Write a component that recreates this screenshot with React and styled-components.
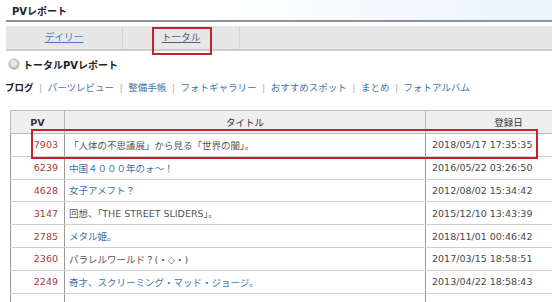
import React from "react";
import styled, { createGlobalStyle } from "styled-components";

const GlobalStyle = createGlobalStyle`
  html, body {
    margin: 0;
    padding: 0;
    background: #fff;
    overflow: hidden;
  }
  body {
    font-family: "DejaVu Sans", "Noto Sans CJK JP", sans-serif;
    font-size: 9.5px;
    color: #333;
  }
`;

const tabs = [
  { label: "デイリー", current: false },
  { label: "トータル", current: true },
];

const categories = ["パーツレビュー", "整備手帳", "フォトギャラリー", "おすすめスポット", "まとめ", "フォトアルバム"];

const rows = [
  { pv: 7903, title: "「人体の不思議展」から見る「世界の闇」。", date: "2018/05/17 17:35:35", visited: true },
  { pv: 6239, title: "中国４０００年のォ～！", date: "2016/05/22 03:26:50" },
  { pv: 4628, title: "女子アメフト？", date: "2012/08/02 15:34:42" },
  { pv: 3147, title: "回想、「THE STREET SLIDERS」。", date: "2015/12/10 13:43:39", visited: true },
  { pv: 2785, title: "メタル姫。", date: "2018/11/01 00:46:42" },
  { pv: 2360, title: "パラレルワールド？(・◇・)", date: "2017/03/15 18:58:51", visited: true },
  { pv: 2249, title: "奇才、スクリーミング・マッド・ジョージ。", date: "2013/04/22 18:58:43" },
  { pv: "", title: "", date: "" },
];

const App = () => (
  <>
    <GlobalStyle />
    <Page>
      <TitleBar>PVレポート</TitleBar>
      <TabBar>
        {tabs.map((t) => (
          <Tab key={t.label}>
            <TabLink $current={t.current}>{t.label}</TabLink>
          </Tab>
        ))}
      </TabBar>
      <Heading>
        <RadioIcon />
        トータルPVレポート
      </Heading>
      <CategoryNav>
        <strong>ブログ</strong>
        {categories.map((c) => (
          <React.Fragment key={c}>
            <Sep>|</Sep>
            <NavLink>{c}</NavLink>
          </React.Fragment>
        ))}
      </CategoryNav>
      <Table>
        <colgroup>
          <col style={{ width: 54 }} />
          <col style={{ width: 361 }} />
          <col style={{ width: 166 }} />
        </colgroup>
        <thead>
          <tr>
            <Th $bold>PV</Th>
            <Th>タイトル</Th>
            <Th>登録日</Th>
          </tr>
        </thead>
        <tbody>
          {rows.map((r, i) => (
            <tr key={i}>
              <PvCell>{r.pv}</PvCell>
              <TitleCell>
                <TitleLink $visited={r.visited}>{r.title}</TitleLink>
              </TitleCell>
              <DateCell>{r.date}</DateCell>
            </tr>
          ))}
        </tbody>
      </Table>
      <Highlight style={{ left: 152, top: 27, width: 56, height: 24 }} />
      <Highlight style={{ left: 31, top: 129, width: 503, height: 26 }} />
    </Page>
  </>
);

const RadioIcon = () => (
  <svg width="12" height="12" viewBox="0 0 12 12">
    <defs>
      <radialGradient id="rg" cx="45%" cy="40%" r="60%">
        <stop offset="0%" stopColor="#f4f4f4" />
        <stop offset="60%" stopColor="#d8d8d8" />
        <stop offset="100%" stopColor="#a8a8a8" />
      </radialGradient>
    </defs>
    <circle cx="6" cy="6" r="5.2" fill="url(#rg)" stroke="#b4b4b4" strokeWidth="0.8" />
    <circle cx="6" cy="6" r="2.4" fill="#e8e8e8" />
  </svg>
);

const Page = styled.div`
  position: relative;
  padding: 0 0 0 6px;
  width: 600px;
`;

const TitleBar = styled.div`
  height: 20px;
  line-height: 23px;
  padding-left: 6px;
  font-weight: bold;
  font-size: 10px;
  color: #222;
  background: linear-gradient(to right, #ffffff 0%, #ffffff 35%, #e6f2fc 100%);
  border-bottom: 2px solid #8d949b;
`;

const TabBar = styled.div`
  display: flex;
  margin-top: 4px;
  height: 23px;
  background: #e7e7e7;
  border-bottom: 2px solid #cdcdcd;
`;

const Tab = styled.div`
  width: 116px;
  border-right: 1px solid #d3d3d3;
  text-align: center;
  line-height: 23px;
  font-size: 9.7px;
`;

const TabLink = styled.a`
  color: ${({ $current }) => ($current ? "#55607a" : "#4a78b4")};
  text-decoration: underline;
`;

const Heading = styled.div`
  display: flex;
  align-items: center;
  gap: 3px;
  height: 14px;
  margin: 6px 0 0 2px;
  font-weight: bold;
  font-size: 10px;
  color: #222;
`;

const CategoryNav = styled.div`
  display: flex;
  align-items: center;
  height: 14px;
  margin: 9px 0 0 -1px;
  color: #3a6fa8;

  strong {
    color: #222;
  }
`;

const Sep = styled.span`
  color: #b0b0b0;
  margin: 0 5.5px;
`;

const NavLink = styled.a`
  color: #3f73ac;
`;

const Table = styled.table`
  margin: 16px 0 0 4px;
  border-collapse: collapse;
  table-layout: fixed;
  width: 581px;
`;

const Th = styled.th`
  height: 22px;
  padding: 0;
  background: #efefef;
  border: 1px solid #b9b9b9;
  font-weight: ${({ $bold }) => ($bold ? "bold" : "normal")};
  color: #333;
  text-align: center;
  vertical-align: middle;
`;

const Cell = styled.td`
  height: 21.8px;
  padding: 0;
  border-top: 1px solid #cfcfcf;
  border-bottom: 1px solid #cfcfcf;
  border-left: 1px solid #9a9a9a;
  border-right: 1px solid #9a9a9a;
  white-space: nowrap;
  vertical-align: middle;
`;

const PvCell = styled(Cell)`
  text-align: right;
  padding-right: 6px;
  color: #a83a3a;
`;

const TitleCell = styled(Cell)`
  padding-left: 4px;
`;

const TitleLink = styled.a`
  color: ${({ $visited }) => ($visited ? "#555" : "#3c72ad")};
`;

const DateCell = styled(Cell)`
  padding-left: 6px;
  color: #484848;
`;

const Highlight = styled.div`
  position: absolute;
  border: 2px solid #c4232d;
  pointer-events: none;
`;

export default App;
